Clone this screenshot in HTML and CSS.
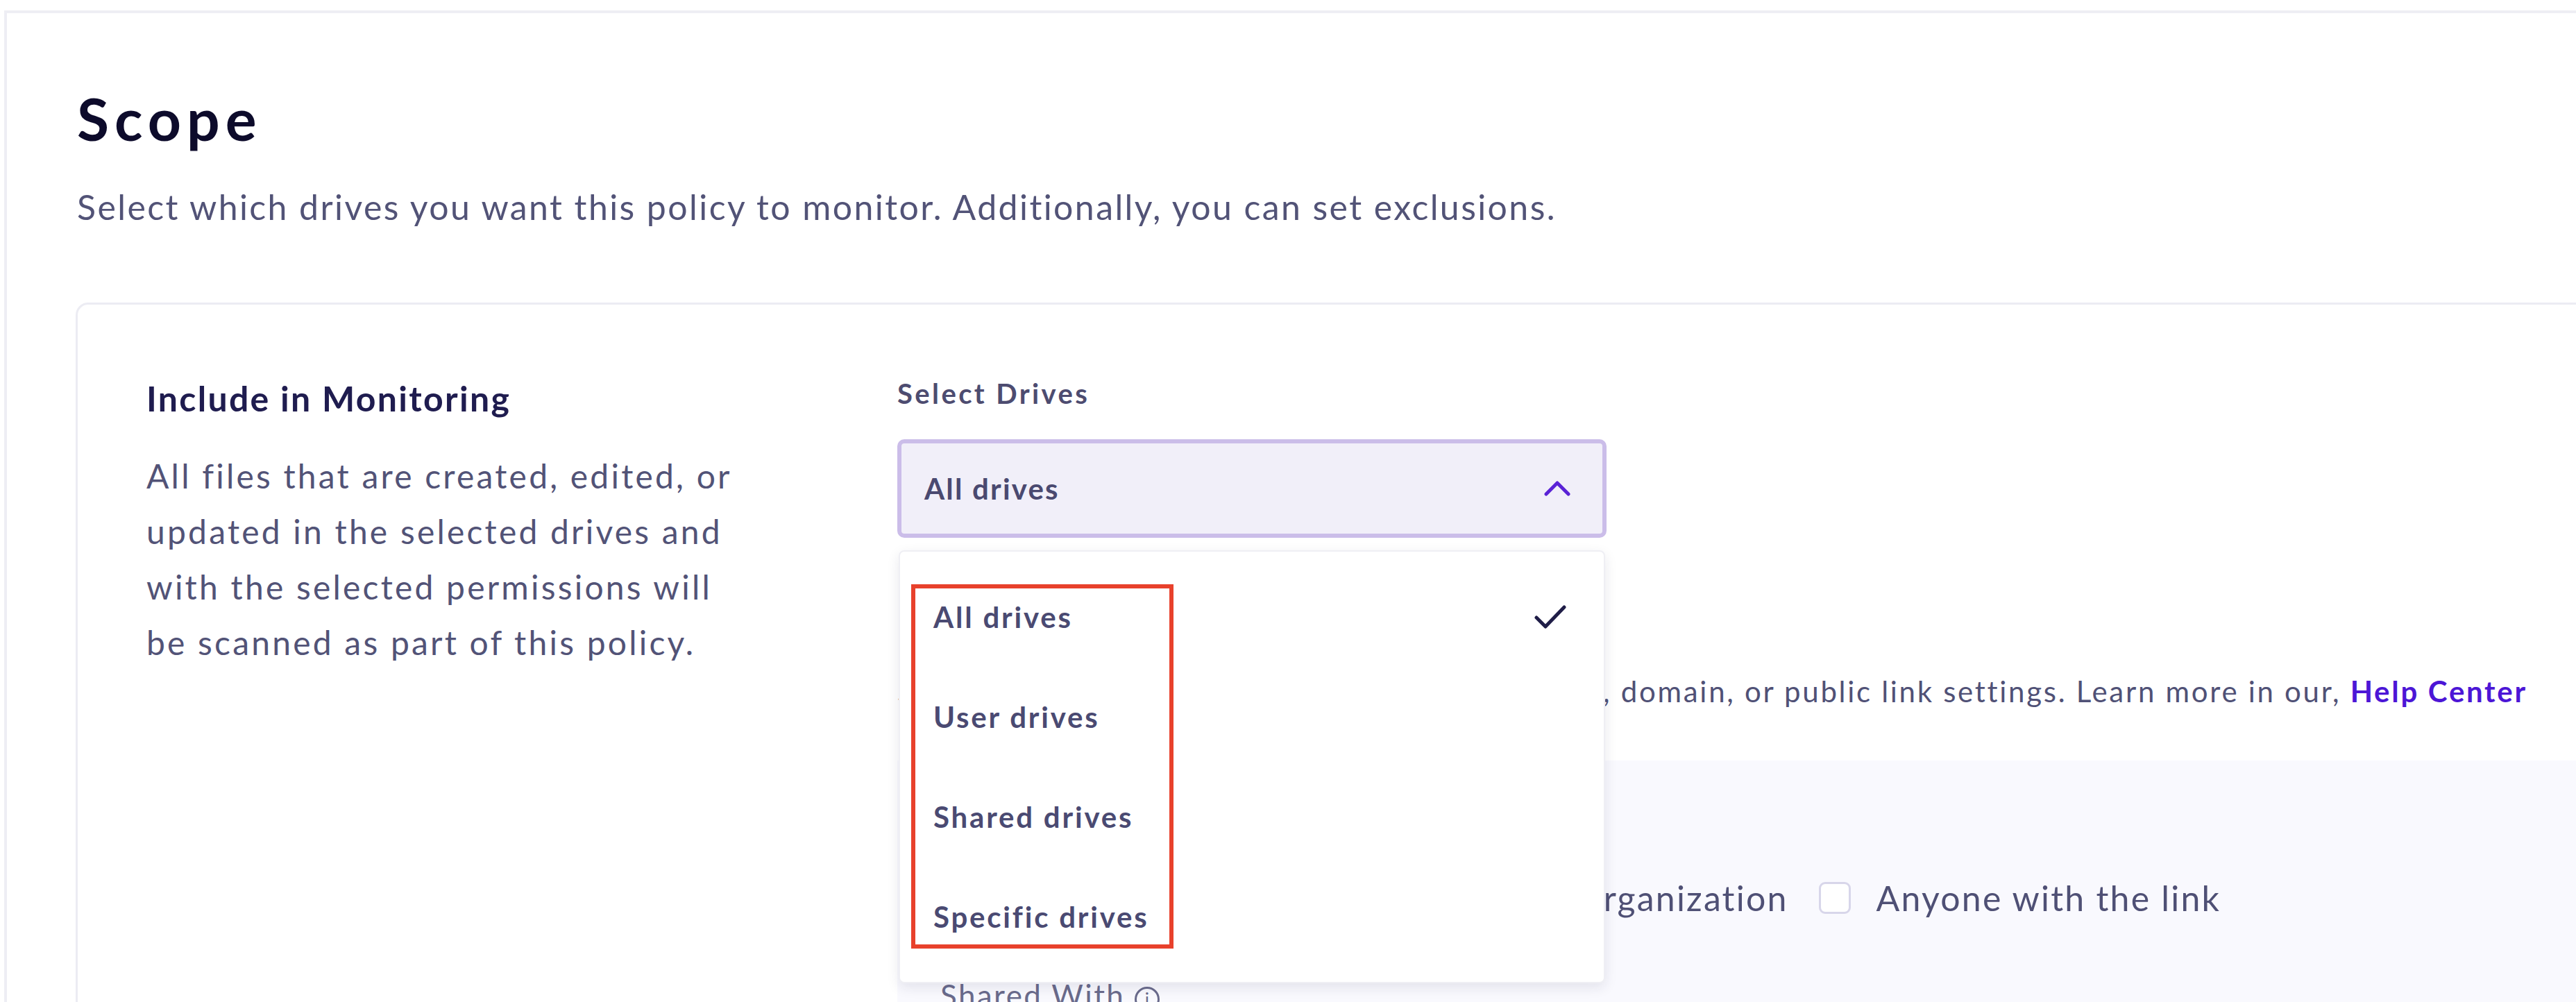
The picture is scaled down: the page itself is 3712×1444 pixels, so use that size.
FILE: index.html
```html
<!DOCTYPE html>
<html lang="en">
<head>
<meta charset="utf-8">
<title>Scope</title>
<link rel="stylesheet" href="styles.css">
</head>
<body>
<div class="panel">
  <h1 class="title">Scope</h1>
  <p class="subtitle">Select which drives you want this policy to monitor. Additionally, you can set exclusions.</p>

  <section class="card">
    <div class="col-left">
      <h2 class="section-title">Include in Monitoring</h2>
      <p class="section-desc">All files that are created, edited, or<br>updated in the selected drives and<br>with the selected permissions will<br>be scanned as part of this policy.</p>
    </div>

    <div class="col-right">
      <div class="field-label">Select Drives</div>
      <div class="select-wrap">
        <div class="select">
          <span class="select-value">All drives</span>
          <svg class="chevron" width="38" height="22" viewBox="0 0 38 22"><polyline points="3,19 19,3 35,19" fill="none" stroke="#5a22d6" stroke-width="5" stroke-linecap="round" stroke-linejoin="round"/></svg>
        </div>

        <ul class="menu">
          <li class="menu-item">All drives
            <svg class="check" width="46" height="36" viewBox="0 0 46 36"><polyline points="3,19 16,32 43,4" fill="none" stroke="#1f1d47" stroke-width="5" stroke-linecap="round" stroke-linejoin="round"/></svg>
          </li>
          <li class="menu-item">User drives</li>
          <li class="menu-item">Shared drives</li>
          <li class="menu-item">Specific drives</li>
        </ul>
        <div class="annotation"></div>
      </div>

      <p class="perm-text">Select sharing permission to include: user, group, domain, or public link settings. Learn more in our, <a class="link">Help Center</a></p>

      <div class="perm-panel">
        <div class="check-row">
          <label class="cb-item"><span class="cb"></span>Specific people</label>
          <label class="cb-item"><span class="cb"></span>Anyone in the organization</label>
          <label class="cb-item"><span class="cb"></span>Anyone with the link</label>
        </div>
        <div class="shared-with">Shared With <span class="info">i</span></div>
      </div>
    </div>
  </section>
</div>
</body>
</html>
```

FILE: styles.css
```css
* { box-sizing: border-box; }

html, body {
  margin: 0;
  padding: 0;
  background: #ffffff;
  overflow: hidden;
}

body {
  width: 3712px;
  height: 1444px;
  font-family: "Lato", "Open Sans", sans-serif;
  color: #505176;
}

.panel {
  margin: 15px 0 0 6px;
  height: 1429px;
  border-top: 4px solid #eeeef4;
  border-left: 4px solid #eeeef4;
  padding: 105px 0 0 101px;
  overflow: hidden;
}

.title {
  margin: 0;
  font-size: 84px;
  line-height: 94px;
  font-weight: 700;
  color: #0d0b2b;
  letter-spacing: 8px;
}

.subtitle {
  margin: 50px 0 0 0;
  font-size: 50px;
  line-height: 60px;
  font-weight: 400;
  color: #525377;
  letter-spacing: 2.4px;
}

.card {
  margin: 108px -80px 0 -2px;
  height: 1200px;
  border: 3px solid #ececf3;
  border-radius: 18px;
  background: #ffffff;
  display: grid;
  grid-template-columns: 1082px 1fr;
  padding: 105px 0 0 99px;
}

.section-title {
  margin: 0;
  font-size: 50px;
  line-height: 60px;
  font-weight: 700;
  color: #1f1c4f;
  letter-spacing: 2.3px;
}

.section-desc {
  margin: 42px 0 0 0;
  font-size: 48px;
  line-height: 80px;
  color: #525377;
  letter-spacing: 3.2px;
}

.field-label {
  font-size: 40px;
  line-height: 46px;
  font-weight: 700;
  color: #4d4c70;
  letter-spacing: 3.4px;
}

.select-wrap {
  position: relative;
  margin-top: 43px;
  width: 1022px;
}

.select {
  height: 142px;
  border: 6px solid #cbbde9;
  border-radius: 10px;
  background: #f1eff9;
  display: flex;
  align-items: center;
  justify-content: space-between;
  padding: 0 46px 0 33px;
}

.select-value {
  font-size: 42px;
  font-weight: 700;
  color: #4a4970;
  letter-spacing: 2.2px;
}

.chevron { display: block; }

.menu {
  position: absolute;
  left: 2px;
  top: 160px;
  width: 1018px;
  margin: 0;
  padding: 22px 54px 22px 48px;
  list-style: none;
  background: #ffffff;
  border: 2px solid #efeff4;
  border-radius: 8px;
  box-shadow: 0 6px 18px rgba(30, 30, 70, 0.10);
  z-index: 5;
}

.menu-item {
  height: 144px;
  line-height: 144px;
  font-size: 42px;
  font-weight: 700;
  color: #4a4a72;
  letter-spacing: 2.8px;
  display: flex;
  align-items: center;
  justify-content: space-between;
}

.check { display: block; }

.annotation {
  position: absolute;
  left: 20px;
  top: 209px;
  width: 378px;
  height: 525px;
  border: 6px solid #e8412c;
  z-index: 6;
}

.perm-text {
  margin: 191px 0 0 0;
  font-size: 42px;
  line-height: 60px;
  color: #505176;
  letter-spacing: 2.7px;
  white-space: nowrap;
}

.link {
  color: #4c16d6;
  font-weight: 700;
}

.perm-panel {
  margin-top: 70px;
  height: 600px;
  background: #f9f9fe;
  padding: 168px 0 0 62px;
}

.check-row {
  display: flex;
  align-items: center;
  gap: 44px;
  font-size: 50px;
  line-height: 60px;
  color: #4f5075;
  letter-spacing: 2.2px;
}

.cb-item {
  display: flex;
  align-items: center;
  gap: 37px;
}

.cb {
  width: 46px;
  height: 46px;
  border: 3px solid #d8d6ea;
  border-radius: 9px;
  background: #ffffff;
}

.shared-with {
  margin-top: 80px;
  font-size: 44px;
  line-height: 60px;
  color: #6a6b8c;
  letter-spacing: 2.4px;
}

.info {
  display: inline-block;
  width: 36px;
  height: 36px;
  border: 3px solid #6a6b8c;
  border-radius: 50%;
  font-size: 26px;
  line-height: 30px;
  text-align: center;
  vertical-align: middle;
  letter-spacing: 0;
}
```
